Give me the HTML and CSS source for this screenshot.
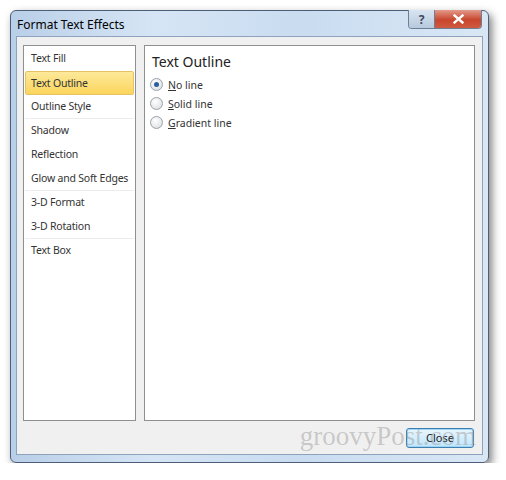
FILE: index.html
```html
<!DOCTYPE html>
<html lang="en">
<head>
  <meta charset="UTF-8" />
  <title>Format Text Effects</title>
  <link rel="stylesheet" href="styles.css">
</head>
<body>
  <div class="window">
    <div class="titlebar">
      <span class="title">Format Text Effects</span>
      <div class="caption-btns">
        <span class="cap-btn help">?</span>
        <span class="cap-btn close">
          <svg width="11" height="10" viewBox="0 0 11 10"><path d="M1.5 1.5 L9.5 8.5 M9.5 1.5 L1.5 8.5" stroke="#fff" stroke-width="2.4" stroke-linecap="square"/></svg>
        </span>
      </div>
    </div>

    <div class="client">
      <div class="panels">
        <ul class="categories">
          <li>Text Fill</li>
          <li class="selected">Text Outline</li>
          <li class="sep">Outline Style</li>
          <li>Shadow</li>
          <li>Reflection</li>
          <li class="sep">Glow and Soft Edges</li>
          <li>3-D Format</li>
          <li class="sep">3-D Rotation</li>
          <li>Text Box</li>
        </ul>

        <div class="page">
          <h3>Text Outline</h3>
          <label class="radio"><span class="dot checked"></span><span><u>N</u>o line</span></label>
          <label class="radio"><span class="dot"></span><span><u>S</u>olid line</span></label>
          <label class="radio"><span class="dot"></span><span><u>G</u>radient line</span></label>
        </div>
      </div>

      <div class="footer">
        <button class="btn-close">Close</button>
      </div>
      <span class="watermark">groovyPost.com</span>
    </div>
  </div>
</body>
</html>
```

FILE: styles.css
```css
:root {
  --marco: #c4d7ec;
  --marco-borde: #4d5f78;
  --gris-fondo: #f0f0f0;
  --panel-borde: #8e8f8f;
  --texto: #1e1e1e;
}

body {
  margin: 0;
  background-color: #ffffff;
  font-family: 'Noto Sans', 'Open Sans', sans-serif;
  color: var(--texto);
}

.window {
  position: relative;
  margin: 10px 0 0 10px;
  width: 479px;
  height: 453px;
  box-sizing: border-box;
  border: 1px solid var(--marco-borde);
  border-radius: 6px;
  background: linear-gradient(90deg, #b9cfe8 0%, #d6e5f5 30%, #c9dcf0 60%, #d9e7f5 100%);
  box-shadow: 3px 4px 9px rgba(0, 0, 0, 0.5);
  padding: 0 5px 7px 5px;
  display: flex;
  flex-direction: column;
}

.titlebar {
  height: 25px;
  display: flex;
  align-items: center;
}

.title {
  font-size: 12px;
  padding-left: 1px;
  padding-top: 2px;
  color: #000;
}

.caption-btns {
  margin-left: auto;
  margin-right: 1px;
  align-self: flex-start;
  margin-top: -1px;
  display: flex;
  border: 1px solid #6d7f96;
  border-top: none;
  border-radius: 0 0 4px 4px;
  overflow: hidden;
}

.cap-btn {
  height: 18px;
  display: flex;
  align-items: center;
  justify-content: center;
}

.help {
  width: 25px;
  background: linear-gradient(#d8e4f1, #b7c9de);
  color: #3e4a5a;
  font-size: 12px;
  font-weight: bold;
  border-right: 1px solid #6d7f96;
}

.close {
  width: 46px;
  background: linear-gradient(#e39a8a, #c9452e 55%, #cf5a3f);
}

.client {
  position: relative;
  flex: 1;
  background-color: var(--gris-fondo);
  border: 1px solid #8da2bd;
  display: flex;
  flex-direction: column;
  padding: 8px 7px 0 6px;
}

.panels {
  flex: 1;
  display: flex;
  gap: 8px;
}

.categories {
  list-style: none;
  margin: 0;
  padding: 1px 1px;
  width: 109px;
  background: #ffffff;
  border: 1px solid var(--panel-borde);
  font-size: 10.5px;
  letter-spacing: -0.2px;
}

.categories li {
  height: 23px;
  line-height: 23px;
  padding-left: 6px;
  border-bottom: 1px solid transparent;
  white-space: nowrap;
  color: #333;
}

.categories li.sep {
  border-bottom-color: #ececec;
}

.categories li.selected {
  background: linear-gradient(#fde99a, #fbd55d);
  border: 1px solid #e5c365;
  border-radius: 2px;
  height: 22px;
  line-height: 22px;
  padding-left: 5px;
}

.page {
  flex: 1;
  background: #ffffff;
  border: 1px solid var(--panel-borde);
  padding: 6px 7px;
}

.page h3 {
  margin: 0 0 4px 0;
  font-size: 14px;
  font-weight: normal;
  color: #222;
}

.radio {
  display: flex;
  align-items: center;
  gap: 5px;
  height: 19px;
  margin-left: -2px;
  font-size: 10.5px;
  color: #333;
}

.dot {
  width: 11px;
  height: 11px;
  border-radius: 50%;
  border: 1px solid #9aa2aa;
  background: radial-gradient(circle at 40% 35%, #ffffff, #d6d9dc);
  position: relative;
}

.dot.checked::after {
  content: "";
  position: absolute;
  left: 3px;
  top: 3px;
  width: 5px;
  height: 5px;
  border-radius: 50%;
  background: #2a5f9e;
}

.footer {
  height: 33px;
  display: flex;
  align-items: center;
  justify-content: flex-end;
}

.btn-close {
  width: 68px;
  height: 20px;
  margin-right: 1px;
  font-family: inherit;
  font-size: 11px;
  color: #222;
  border: 1px solid #3c7fb1;
  border-radius: 3px;
  background: linear-gradient(#eaf6fd, #bee6fd);
  box-shadow: inset 0 0 0 1px #9fd4f2;
}

.watermark {
  position: absolute;
  right: 6px;
  bottom: 2px;
  font-family: 'Liberation Serif', serif;
  font-size: 27px;
  color: rgba(150, 150, 150, 0.45);
  pointer-events: none;
}
```
